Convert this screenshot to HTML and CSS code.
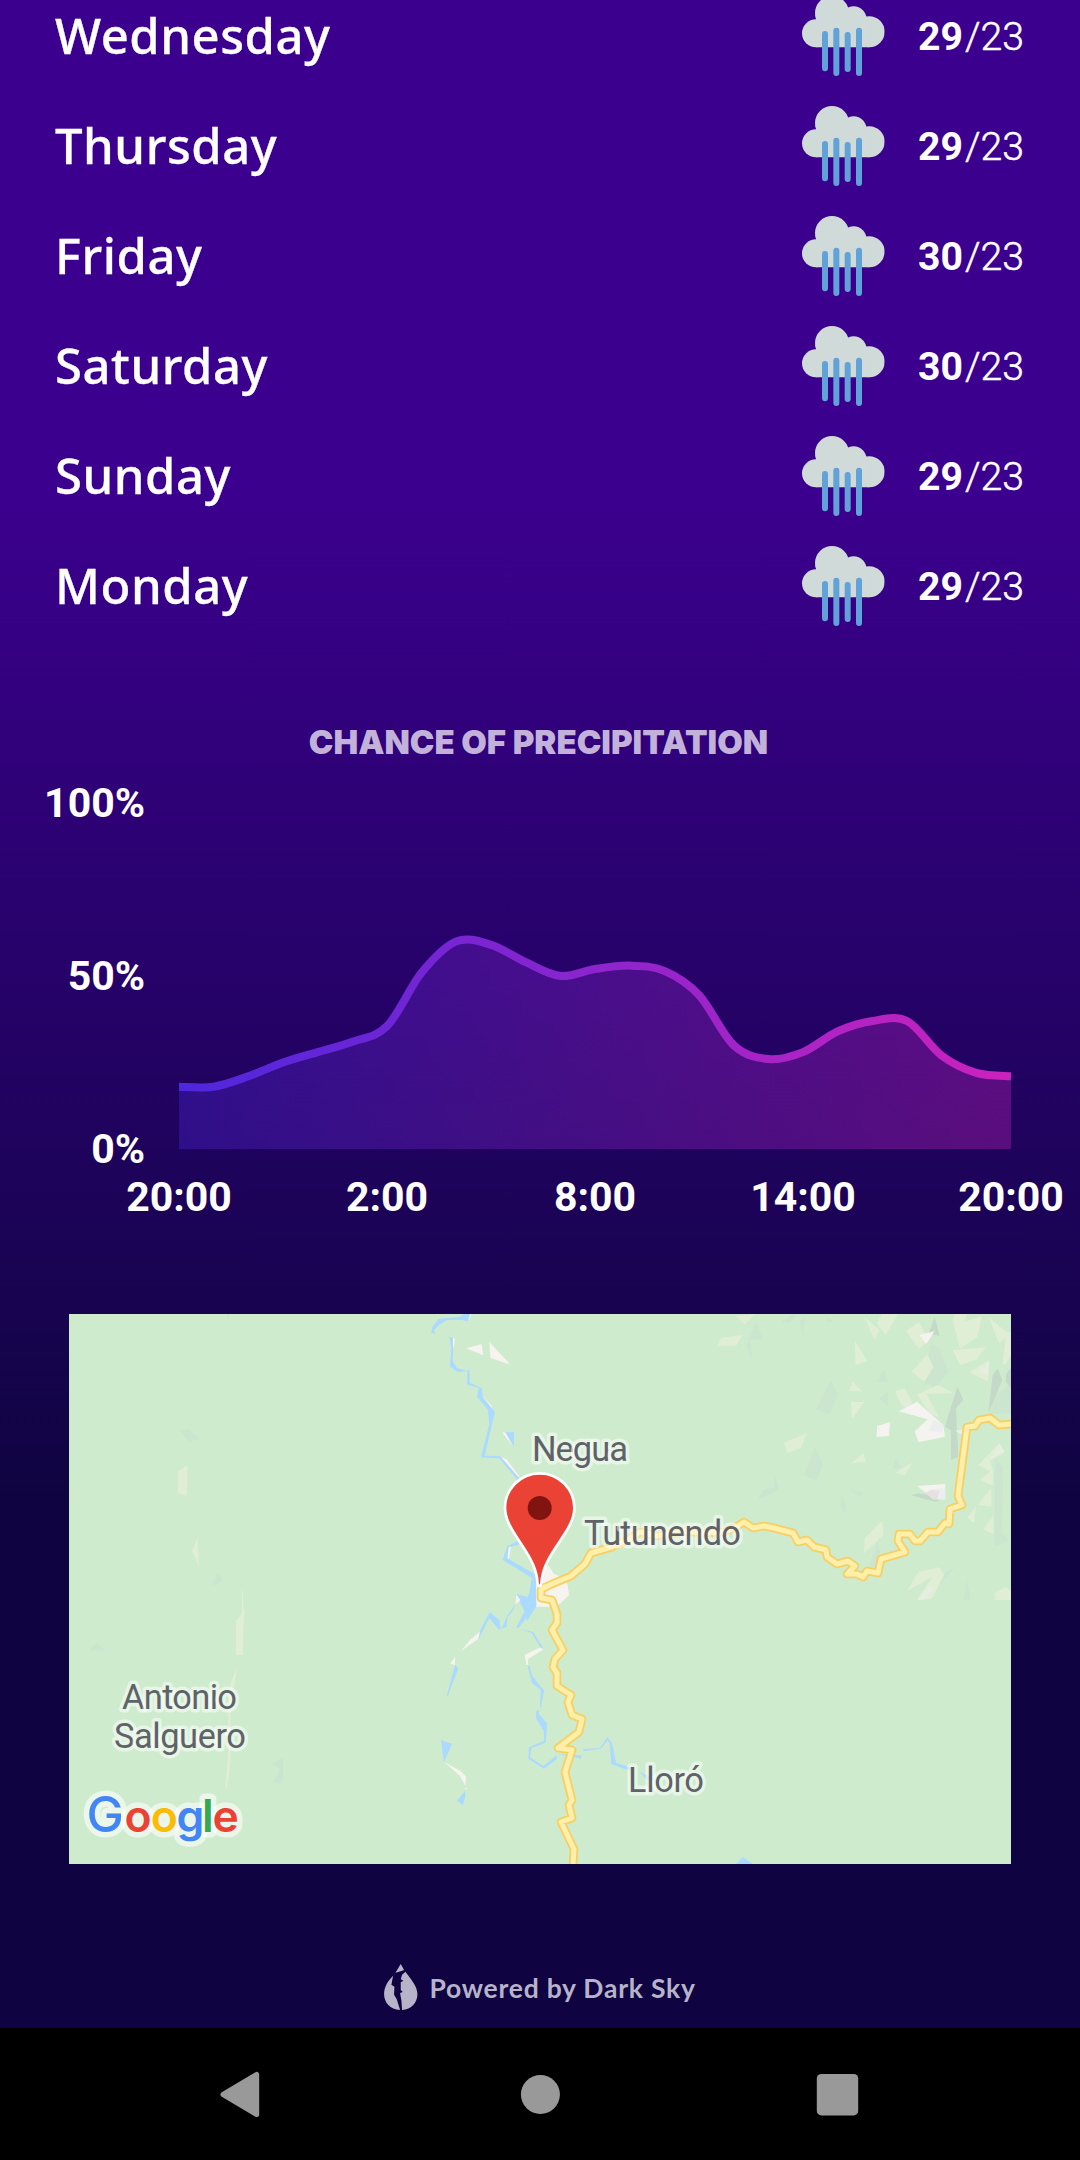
FILE: index.html
```html
<!DOCTYPE html>
<html lang="en">
<head>
<meta charset="utf-8">
<title>Weather</title>
<link rel="stylesheet" href="styles.css">
</head>
<body>
<svg class="defs" width="0" height="0" aria-hidden="true">
  <symbol id="rain" viewBox="66 318 248 240">
    <g fill="#d0dad9">
      <circle cx="108" cy="430" r="42"/><circle cx="156" cy="369" r="51"/><circle cx="221" cy="388" r="39"/><circle cx="267.500" cy="425" r="46.500"/>
      <path d="M108 388L106 375 180 340 250 380 268 400V472H108z"/>
    </g>
    <path d="M135 432V535M169 422V549M203 435V537M237 422V549" stroke="#61a2d9" stroke-width="18" stroke-linecap="round"/>
  </symbol>
</svg>
<div class="screen">
  <main class="content">
    <ul class="days">
      <li class="day"><span class="name">Wednesday</span><svg class="icon"><use href="#rain"/></svg><span class="temp"><b>29</b><i>/</i>23</span></li>
      <li class="day"><span class="name">Thursday</span><svg class="icon"><use href="#rain"/></svg><span class="temp"><b>29</b><i>/</i>23</span></li>
      <li class="day"><span class="name">Friday</span><svg class="icon"><use href="#rain"/></svg><span class="temp"><b>30</b><i>/</i>23</span></li>
      <li class="day"><span class="name">Saturday</span><svg class="icon"><use href="#rain"/></svg><span class="temp"><b>30</b><i>/</i>23</span></li>
      <li class="day"><span class="name">Sunday</span><svg class="icon"><use href="#rain"/></svg><span class="temp"><b>29</b><i>/</i>23</span></li>
      <li class="day"><span class="name">Monday</span><svg class="icon"><use href="#rain"/></svg><span class="temp"><b>29</b><i>/</i>23</span></li>
    </ul>

    <h2 class="title">CHANCE OF PRECIPITATION</h2>

    <section class="chart">
      <div class="y-axis"><span>100%</span><span>50%</span><span>0%</span></div>
      <svg class="plot" viewBox="0 0 832 346">
        <defs>
          <linearGradient id="hue" gradientUnits="userSpaceOnUse" x1="0" y1="0" x2="832" y2="0">
            <stop offset="0" stop-color="#4e27dd"/><stop offset="1" stop-color="#cb22bd"/>
          </linearGradient>
          <clipPath id="plot-clip"><rect width="832" height="346"/></clipPath>
        </defs>
        <g clip-path="url(#plot-clip)">
          <path id="area" fill="url(#hue)" fill-opacity=".34"/>
          <path id="line" fill="none" stroke="url(#hue)" stroke-width="8"/>
        </g>
      </svg>
      <div class="x-axis"><span>20:00</span><span>2:00</span><span>8:00</span><span>14:00</span><span>20:00</span></div>
    </section>

    <svg class="map" viewBox="0 0 942 550">
      <defs>
        <path id="roads" d="M471 276L483 270 502 262 516 250 522 239 543 233 560 225 571 218 588 222 613 217 632 219 655 218 667 213 675 208 684 214 695 212 705 214 724 219 729 228 738 226 745 233 757 236 758 243 768 250 779 247 786 252 778 260 788 260 794 263 798 257 809 259 812 245 836 238 829 227 830 220 841 220 846 227 851 227 859 218 869 218 876 209 880 210 881 195 893 191 889 182 898 113 906 112 910 106 921 104 930 111 942 110M477 272L472 276 472 284 483 286 488 300 488 309 483 316 494 336 486 345 484 353 488 359 488 372 502 381 499 388 503 401 513 405 510 418 489 434 503 436 496 458 503 486 500 491 503 504 492 508 505 535 504 552"/>
      </defs>
      <rect width="942" height="550" fill="#ceebce"/>
      <!-- west: terrain -->
      <g transform="translate(-9 -14) scale(.33333)">
        <path fill="#cce5cf" d="M362 393L386 386 417 416 388 426zM472 815L487 840 455 860zM500 42H510L502 60z"/>
        <path fill="#dfeed5" d="M354 514L383 494 380 588 354 579zM413 712L417 800 396 752zM546 870L549 872 551 930 555 934 551 960 548 1065 528 1065V966L546 938z"/>
      </g>
      <g transform="translate(-9 306) scale(.33333)">
        <path fill="#dfeed5" d="M528 0H551L545 82 528 106zM530 143L524 195 512 260V420L506 470 499 510 497 490 504 410 505 240 512 190z"/>
        <path fill="#cce5cf" d="M88 90L110 70 138 92zM670 414V488L638 490 660 450 638 430z"/>
      </g>
      <!-- north-east: hills -->
      <g transform="translate(631 -14) scale(.33333)">
        <path fill="#cce5cf" d="M244 65L280 42 286 48 270 70zM168 65L188 115 150 120 158 185 140 135zM300 60L315 55 308 112zM392 240L415 285 388 342 347 328zM551 206L565 245 530 246zM565 275L563 318 537 295zM345 440L370 495 348 543 312 525zM220 512L238 570 172 600 190 570 224 560zM446 563L470 575 496 580 478 590zM425 586L438 615 434 640 422 620zM588 473L604 502 578 506zM533 726L541 760 530 800 508 800zM693 130L718 145 745 215 720 245 710 280 690 250 675 255zM765 800L720 855 690 850zM800 840L812 900H790zM933 250V340L870 342 880 290zM885 475L910 500 905 700 930 720 884 740zM375 52L400 60 385 68z"/>
        <path fill="#c4d9c7" d="M704 52L719 108 686 100zM772 260L790 300 768 325 775 470 753 480V390L735 380zM893 205L907 240 865 340 878 225zM933 205V264L917 245 918 222zM632 586L655 580 735 590 708 606z"/>
        <path fill="#dfeed5" d="M107 48L165 42 135 73zM63 113L128 105 108 137 53 138zM493 50L538 90 524 119zM545 42H595L556 105 530 70zM465 122L503 183 466 195zM618 92L657 67 686 120 657 147zM765 42H800L795 65 845 48 833 110 780 146 758 60zM866 52L918 95 933 98 897 130zM918 100L933 98V165L915 195 908 192zM758 150L858 142 828 180 780 195zM868 180L865 245 808 217zM681 163L701 200 673 245 635 215zM458 245L488 275 447 273zM453 306H493L456 357zM585 272L615 266 636 305 625 332 600 310zM651 284L714 254 760 280 680 282 716 352 690 340zM251 428L320 400 303 443 262 459zM490 460L498 485 455 489zM638 487L615 526 585 518zM545 662L552 704 492 760 494 715zM898 428L914 455 870 482 881 520 835 496zM879 507V557L840 540zM873 565L875 620 834 614zM828 618L823 670 801 653zM880 648V703L850 688zM622 872L655 815 718 802 733 825 695 898H652L697 832zM882 880L918 860 933 875V900H886z"/>
        <path fill="#f5f3ef" d="M658 106L704 93 679 132zM596 334L651 305 730 375 735 410 655 427 644 394 683 358zM532 378L570 366 567 408 529 411zM652 558L736 552V598H700z"/>
        <path fill="#ecedef" d="M700 360L728 374V398L690 392zM766 392L790 388V406zM680 570L735 565V598H708z"/>
        <path fill="#e6eee1" d="M868 187L862 227 836 214zM898 432L914 455 868 480zM690 855L700 870 670 900H652z"/>
        <path fill="#e6e0e0" d="M675 578L695 570 718 572 712 598H698z"/>
      </g>
      <!-- rivers and clearings, north -->
      <g transform="translate(331 -14) scale(.33333)">
        <path fill="#f7f3ee" d="M198 145L245 132 250 166zM268 126L331 194 271 174zM307 398L316 397 342 442zM300 470L320 478 357 528 350 538zM445 795L460 820 500 840 508 885 470 920H408V820zM250 290L276 318V325zM324 742L333 740 328 775 322 778zM158 114L165 116 160 150zM205 42L213 42 206 63z"/>
        <path fill="#aadaff" d="M192 42H210L204 63 184 60 142 60 118 74 101 92 108 103 94 98 97 80 116 57 150 53 178 51zM148 110L158 113 159 150 158 182 171 204 202 213 208 208 210 249 240 262 246 266 249 295 285 336 276 372 254 467 300 468 358 535 352 540 298 475 243 472 268 372 264 330 231 290 237 264 202 254V214L172 215 150 200 154 145zM316 397L342 396V440zM355 722L356 734 326 742 322 775 400 820 408 832 409 918 382 962 372 930 348 882 382 893 388 880 397 835 308 780 322 738z"/>
      </g>
      <!-- rivers and clearings, south -->
      <g transform="translate(331 246) scale(.33333)">
        <path fill="#f7f3ee" d="M349 103L361 120 346 136zM242 212L234 238 184 272 210 240zM165 291V316L151 310zM374 284L422 262 431 268 383 298 385 315 379 314zM133 606L183 634 198 650 196 678 180 648zM195 684H201L198 690z"/>
        <path fill="#aadaff" d="M313 0H328L405 43 408 136 356 204 349 202 382 138 350 103 386 112 396 52zM269 157L298 180 302 208 297 209 268 174 236 238 240 212zM352 126L335 157 322 172 320 200 305 207 320 170zM362 206L400 217 431 266 423 264 395 220zM382 315L388 318 396 346 418 375 432 390 424 440 420 440 422 388 396 370zM165 314L175 325 142 412 141 405zM408 452L417 450 416 461 441 490 440 515 437 548 394 564 390 592 430 618 470 586V598L432 626 385 596 387 562 433 542 431 512 408 475zM123 540L156 552 132 606zM195 693L196 710 188 735 171 722zM470 583L545 586 542 597 525 592zM549 568L600 564 622 532 636 550 648 608 690 622 702 632 676 628 634 612 629 548 622 542 602 566 551 574zM720 636L765 658 768 664 740 660z"/>
      </g>
      <path fill="#aadaff" d="M667 550L674 543 684 550z"/>
      <g fill="none" stroke-linejoin="round">
        <use href="#roads" stroke="#f6cf65" stroke-width="8.600"/>
        <use href="#roads" stroke="#ffefa9" stroke-width="5"/>
      </g>
      <g class="place">
        <text x="463" y="147" textLength="96">Negua</text>
        <text x="515" y="231" textLength="157">Tutunendo</text>
        <text x="559" y="478" textLength="76">Lloró</text>
        <text x="53" y="395" textLength="115">Antonio</text>
        <text x="45" y="434" textLength="132">Salguero</text>
      </g>
      <path fill="#ea4335" stroke="#fff" stroke-width="2.700" d="M470.500 272C468.300 272 468.500 268 468 264C464 237 436 217 436 194A34.700 34.700 0 0 1 505.400 194C505.400 217 477 237 473 264C472.500 268 472.700 272 470.500 272z"/>
      <circle cx="470.700" cy="194" r="12" fill="#811411"/>
      <g class="google">
        <text class="halo" y="517.500" aria-hidden="true"><tspan class="cap" x="17.500">G</tspan><tspan x="55.500">o</tspan><tspan x="81.800">o</tspan><tspan x="107.500">g</tspan><tspan x="133">l</tspan><tspan x="143.500">e</tspan></text>
        <text y="517.500"><tspan class="cap" x="17.500" fill="#4285f4">G</tspan><tspan x="55.500" fill="#ea4335">o</tspan><tspan x="81.800" fill="#fbbc05">o</tspan><tspan x="107.500" fill="#4285f4">g</tspan><tspan x="133" fill="#34a853">l</tspan><tspan x="143.500" fill="#ea4335">e</tspan></text>
      </g>
    </svg>

    <footer class="credit">
      <svg class="drop" viewBox="0 0 100 138">
        <path fill="#b7b3c9" d="M50 0L60 18 50 22 34 26zM27 35L22 62 31 68 30 92 38 106 48 138C18 136 0 116 0 90C0 68 12 50 27 35zM64 23C80 45 100 66 100 90C100 116 82 137 54 138L52 110 48 87 56 84 50 78V55L58 50 50 46 54 32z"/>
      </svg>
      <span>Powered by Dark Sky</span>
    </footer>
  </main>
  <nav class="navbar">
    <svg viewBox="0 0 44 48"><path d="M38.700 4.500V44.500L5 24.500z" fill="#999" stroke="#999" stroke-width="5" stroke-linejoin="round"/></svg>
    <svg viewBox="0 0 44 48"><circle cx="23.400" cy="24.500" r="19.500" fill="#999"/></svg>
    <svg viewBox="0 0 44 48"><rect x=".8" y="4" width="41.400" height="41.400" rx="4.500" fill="#999"/></svg>
  </nav>
</div>
<script src="chart.js"></script>
</body>
</html>
```
FILE: styles.css
```css
* { box-sizing: border-box; }
body { margin: 0; background: #000; font-family: Roboto, sans-serif; color: #fff; }
.defs { position: absolute; }
.screen { width: 1080px; height: 2160px; display: flex; flex-direction: column; overflow: hidden; }
.content {
  height: 2028px; flex: none; display: flex; flex-direction: column; overflow: hidden;
  background: linear-gradient(#3c008f 480px, #0f0441 1500px);
}
.days { list-style: none; margin: -18px 0 0; padding: 0 57px 0 55px; }
.day { height: 110px; display: flex; align-items: center; }
.name { flex: 1; padding-bottom: 4px; font: 500 49px/66px "Noto Sans", sans-serif; letter-spacing: .55px; -webkit-text-stroke: .3px #fff; }
.icon { width: 82.700px; height: 80px; margin: 0 33px 2px 0; }
.temp { width: 105px; font-size: 39.200px; line-height: 46px; font-weight: 300; white-space: nowrap; -webkit-text-stroke: .5px #fff; }
.temp b { font-weight: 700; -webkit-text-stroke: 0; }
.temp i { font-style: normal; margin: 0 0 0 2px; }
.title {
  margin: 80px 3px 0 0; height: 40px; line-height: 40px; text-align: center;
  font-family: Inter, sans-serif; font-weight: 900; font-size: 33px; color: #c2b2da;
}
.chart {
  margin: 18px 69px 0 0; display: grid; grid-template-columns: 145px 832px; column-gap: 34px;
  font-size: 41px; line-height: 46px; font-weight: 700;
}
.y-axis { height: 392px; display: flex; flex-direction: column; justify-content: space-between; text-align: right; }
.plot { width: 832px; height: 346px; margin-top: 23px; }
.x-axis { grid-column: 2; margin-top: 2px; display: flex; justify-content: space-between; }
.x-axis span { width: 0; display: flex; justify-content: center; }
.map { display: block; flex: none; width: 942px; height: 550px; margin: 94px 0 0 69px; }
.place { font: 400 34.500px Roboto, sans-serif; fill: #5f6368; stroke: #fff; stroke-opacity: .5; stroke-width: 7px; stroke-linejoin: round; paint-order: stroke; }
.google { font: 600 44.500px Inter, sans-serif; }
.google .cap { font-size: 50px; font-weight: 500; }
.google .halo { fill: none; stroke: #fff; stroke-opacity: .6; stroke-width: 11px; stroke-linejoin: round; }
.credit {
  margin: 99px 0 0 384px; display: flex; align-items: center; gap: 12px; height: 50px;
  font: 700 26.500px/50px Lato, sans-serif; letter-spacing: .76px; color: #b7b3c9;
}
.drop { width: 33.500px; height: 46px; margin-top: -2px; }
.navbar { height: 132px; flex: none; display: flex; justify-content: space-between; align-items: center; padding: 0 220px 0 218px; background: #000; }
.navbar svg { width: 44px; height: 48px; }
```
FILE: chart.js
```js
// Hourly chance of precipitation, in percent.
const hours = [18, 18, 21, 25, 28, 31, 35.5, 51, 60, 59, 54, 50, 52, 53, 51.5, 44.5, 30, 26, 28, 34, 37, 37, 27, 22, 21];
const W = 832, H = 346;
const pts = hours.map((p, i) => [i * W / (hours.length - 1), H - p * H / 100]);
const at = i => pts[Math.max(0, Math.min(pts.length - 1, i))];

let d = `M${pts[0]}`;
for (let i = 0; i < pts.length - 1; i++) {
  const [a, b, c, e] = [at(i - 1), at(i), at(i + 1), at(i + 2)];
  d += `C${b[0] + (c[0] - a[0]) / 6},${b[1] + (c[1] - a[1]) / 6} ${c[0] - (e[0] - b[0]) / 6},${c[1] - (e[1] - b[1]) / 6} ${c}`;
}
document.getElementById('line').setAttribute('d', d);
document.getElementById('area').setAttribute('d', `${d}V${H}H0Z`);
```
